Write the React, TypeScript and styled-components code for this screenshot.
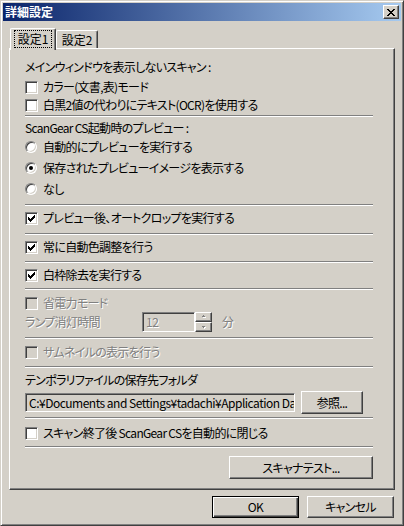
import React from 'react';
import styled, { createGlobalStyle } from 'styled-components';

const FONT = `"MS UI Gothic", "Noto Sans CJK JP", sans-serif`;

const Global = createGlobalStyle`
  html, body { margin: 0; padding: 0; background: #d4d0c8; }
  body { width: 404px; height: 526px; overflow: hidden; }
  * { box-sizing: border-box; }
`;

const Window = styled.div`
  width: 404px;
  height: 526px;
  background: #d4d0c8;
  border: 1px solid;
  border-color: #d4d0c8 #404040 #404040 #d4d0c8;
  box-shadow: inset 1px 1px #fff, inset -1px -1px #808080;
  padding: 2px;
  display: flex;
  flex-direction: column;
  font-family: ${FONT};
  font-size: 12px;
  line-height: 16px;
  color: #000;
  font-feature-settings: "palt";
  letter-spacing: -0.7px;
`;

const TitleBar = styled.div`
  height: 18px;
  flex: none;
  background: linear-gradient(to right, #0a246a, #a6caf0);
  display: flex;
  align-items: center;
  justify-content: space-between;
  padding: 0 2px 0 2px;
`;

const TitleText = styled.span`
  color: #fff;
  font-weight: bold;
  font-size: 12px;
  letter-spacing: 0;
`;

const RaisedBase = styled.div`
  background: #d4d0c8;
  border: 1px solid;
  border-color: #fff #404040 #404040 #fff;
  box-shadow: inset -1px -1px #808080, inset 1px 1px #d4d0c8;
`;

const CloseBtn = styled(RaisedBase)`
  width: 16px;
  height: 14px;
  display: flex;
  align-items: center;
  justify-content: center;
`;

const Body = styled.div`
  flex: 1;
  display: flex;
  flex-direction: column;
  padding: 0 6px 0 6px;
`;

const TabRow = styled.div`
  margin-top: 7px;
  height: 20px;
  display: flex;
  align-items: flex-end;
  padding-left: 1px;
  flex: none;
`;

const Tab = styled.div<{ $active?: boolean; $w: number }>`
  width: ${(p) => p.$w}px;
  height: ${(p) => (p.$active ? 22 : 18)}px;
  margin-bottom: ${(p) => (p.$active ? -2 : 0)}px;
  position: relative;
  z-index: ${(p) => (p.$active ? 1 : 0)};
  background: #d4d0c8;
  border-top: 1px solid #fff;
  border-left: 1px solid #fff;
  border-right: 1px solid #404040;
  border-radius: 2px 2px 0 0;
  box-shadow: inset -1px 0 #808080;
  display: flex;
  align-items: flex-start;
  justify-content: center;
  padding-top: ${(p) => (p.$active ? 2 : 1)}px;
  letter-spacing: 0;
`;

const TabLabel = styled.span<{ $focus?: boolean }>`
  display: block;
  padding: 0 3px;
  height: 16px;
  line-height: 15px;
  outline: ${(p) => (p.$focus ? '1px dotted #000' : 'none')};
  outline-offset: 0;
`;

const Panel = styled.div`
  flex: none;
  border: 1px solid;
  border-color: #fff #404040 #404040 #fff;
  box-shadow: inset -1px -1px #808080;
  padding: 0 21px 10px 15px;
  display: flex;
  flex-direction: column;
`;

const Row = styled.div<{ $mt: number; $h?: number }>`
  margin-top: ${(p) => p.$mt}px;
  height: ${(p) => p.$h ?? 16}px;
  display: flex;
  align-items: center;
  gap: 5px;
  white-space: nowrap;
  flex: none;
`;

const Label = styled.span<{ $disabled?: boolean }>`
  color: ${(p) => (p.$disabled ? '#808080' : '#000')};
  text-shadow: ${(p) => (p.$disabled ? '1px 1px #fff' : 'none')};
`;

const Sep = styled.div<{ $mt: number }>`
  margin-top: ${(p) => p.$mt}px;
  height: 2px;
  flex: none;
  border-top: 1px solid #808080;
  border-bottom: 1px solid #fff;
`;

const Box = styled.span<{ $disabled?: boolean }>`
  width: 13px;
  height: 13px;
  flex: none;
  border: 1px solid;
  border-color: #808080 #fff #fff #808080;
  box-shadow: inset 1px 1px #404040, inset -1px -1px #d4d0c8;
  background: ${(p) => (p.$disabled ? '#d4d0c8' : '#fff')};
  display: flex;
  align-items: center;
  justify-content: center;
`;

const RadioCircle = styled.span`
  width: 12px;
  height: 12px;
  flex: none;
  margin-right: 1px;
  border-radius: 50%;
  border: 1px solid;
  border-color: #808080 #fff #fff #808080;
  box-shadow: inset 1px 1px #404040, inset -1px -1px #d4d0c8;
  background: #fff;
  display: flex;
  align-items: center;
  justify-content: center;
`;

const Dot = styled.span`
  width: 4px;
  height: 4px;
  border-radius: 50%;
  background: #000;
`;

const Field = styled.div<{ $w: number; $h: number; $disabled?: boolean }>`
  width: ${(p) => p.$w}px;
  height: ${(p) => p.$h}px;
  flex: none;
  border: 1px solid;
  border-color: #808080 #fff #fff #808080;
  box-shadow: inset 1px 1px #404040, inset -1px -1px #d4d0c8;
  background: #d4d0c8;
  color: ${(p) => (p.$disabled ? '#808080' : '#000')};
  overflow: hidden;
  white-space: nowrap;
  padding: 0 2px 0 3px;
  display: flex;
  align-items: center;
  letter-spacing: -0.5px;
`;

const LampLabel = styled(Label)`
  width: 112px;
  flex: none;
`;

const Spin = styled.div`
  display: flex;
  flex-direction: column;
  flex: none;
  margin-left: -5px;
  margin-right: 5px;
`;

const SpinBtn = styled(RaisedBase)`
  width: 17px;
  height: 10px;
  display: flex;
  align-items: center;
  justify-content: center;
`;

const Button = styled(RaisedBase)<{ $w: number; $h: number; $default?: boolean }>`
  width: ${(p) => p.$w}px;
  height: ${(p) => p.$h}px;
  flex: none;
  display: flex;
  align-items: center;
  justify-content: center;
  ${(p) =>
    p.$default
      ? `border-color: #000; box-shadow: inset 1px 1px #fff, inset -1px -1px #404040, inset -2px -2px #808080, inset 2px 2px #d4d0c8;`
      : ''}
`;

const EndRow = styled.div<{ $mt: number; $pr: number }>`
  margin-top: ${(p) => p.$mt}px;
  display: flex;
  justify-content: flex-end;
  gap: 8px;
  padding-right: ${(p) => p.$pr}px;
  flex: none;
`;

const PathRow = styled(Row)`
  gap: 6px;
`;

const Check = () => (
  <svg width="7" height="7" viewBox="0 0 7 7" shapeRendering="crispEdges">
    <rect x="0" y="2" width="1" height="3" fill="#000" />
    <rect x="1" y="3" width="1" height="3" fill="#000" />
    <rect x="2" y="4" width="1" height="3" fill="#000" />
    <rect x="3" y="3" width="1" height="3" fill="#000" />
    <rect x="4" y="2" width="1" height="3" fill="#000" />
    <rect x="5" y="1" width="1" height="3" fill="#000" />
    <rect x="6" y="0" width="1" height="3" fill="#000" />
  </svg>
);

const CloseGlyph = () => (
  <svg width="8" height="7" viewBox="0 0 8 7" shapeRendering="crispEdges">
    <path d="M0 0h2v1H0zM6 0h2v1H6zM1 1h2v1H1zM5 1h2v1H5zM2 2h4v1H2zM3 3h2v1H3zM2 4h4v1H2zM1 5h2v1H1zM5 5h2v1H5zM0 6h2v1H0zM6 6h2v1H6z" fill="#000" />
  </svg>
);

const Arrow = ({ up }: { up?: boolean }) => (
  <svg width="6" height="4" viewBox="0 0 6 4" shapeRendering="crispEdges">
    {up ? (
      <>
        <path d="M3 1h1v1H3zM2 2h3v1H2z" fill="#fff" />
        <path d="M2 0h1v1H2zM1 1h3v1H1z" fill="#808080" />
      </>
    ) : (
      <>
        <path d="M2 2h3v1H2zM3 3h1v1H3z" fill="#fff" />
        <path d="M1 1h3v1H1zM2 2h1v1H2z" fill="#808080" />
      </>
    )}
  </svg>
);

const CheckRow = ({ mt, label, checked, disabled }: { mt: number; label: string; checked?: boolean; disabled?: boolean }) => (
  <Row $mt={mt}>
    <Box $disabled={disabled}>{checked ? <Check /> : null}</Box>
    <Label $disabled={disabled}>{label}</Label>
  </Row>
);

const RadioRow = ({ mt, label, on }: { mt: number; label: string; on?: boolean }) => (
  <Row $mt={mt}>
    <RadioCircle>{on ? <Dot /> : null}</RadioCircle>
    <Label>{label}</Label>
  </Row>
);

export default function App() {
  return (
    <>
      <Global />
      <Window>
        <TitleBar>
          <TitleText>詳細設定</TitleText>
          <CloseBtn>
            <CloseGlyph />
          </CloseBtn>
        </TitleBar>
        <Body>
          <TabRow>
            <Tab $active $w={46}>
              <TabLabel $focus>設定1</TabLabel>
            </Tab>
            <Tab $w={42}>
              <TabLabel>設定2</TabLabel>
            </Tab>
          </TabRow>
          <Panel>
            <Row $mt={10}>
              <Label>メインウィンドウを表示しないスキャン :</Label>
            </Row>
            <CheckRow mt={4} label="カラー(文書,表)モード" />
            <CheckRow mt={2} label="白黒2値の代わりにテキスト(OCR)を使用する" />
            <Sep $mt={2} />
            <Row $mt={3}>
              <Label>ScanGear CS起動時のプレビュー :</Label>
            </Row>
            <RadioRow mt={3} label="自動的にプレビューを実行する" />
            <RadioRow mt={5} label="保存されたプレビューイメージを表示する" on />
            <RadioRow mt={5} label="なし" />
            <Sep $mt={7} />
            <CheckRow mt={4} label="プレビュー後、オートクロップを実行する" checked />
            <Sep $mt={7} />
            <CheckRow mt={4} label="常に自動色調整を行う" checked />
            <Sep $mt={6} />
            <CheckRow mt={4} label="白枠除去を実行する" checked />
            <Sep $mt={5} />
            <CheckRow mt={5} label="省電力モード" disabled />
            <Row $mt={1} $h={20}>
              <LampLabel $disabled>ランプ消灯時間</LampLabel>
              <Field $w={53} $h={20} $disabled>
                <Label $disabled>12</Label>
              </Field>
              <Spin>
                <SpinBtn>
                  <Arrow up />
                </SpinBtn>
                <SpinBtn>
                  <Arrow />
                </SpinBtn>
              </Spin>
              <Label $disabled>分</Label>
            </Row>
            <Sep $mt={5} />
            <CheckRow mt={5} label="サムネイルの表示を行う" disabled />
            <Sep $mt={6} />
            <Row $mt={4}>
              <Label>テンポラリファイルの保存先フォルダ</Label>
            </Row>
            <PathRow $mt={3} $h={23}>
              <Field $w={270} $h={19}>C:¥Documents and Settings¥tadachi¥Application Data</Field>
              <Button $w={62} $h={23}>参照...</Button>
            </PathRow>
            <Sep $mt={3} />
            <CheckRow mt={6} label="スキャン終了後 ScanGear CSを自動的に閉じる" />
            <Sep $mt={5} />
            <EndRow $mt={8} $pr={0}>
              <Button $w={144} $h={23}>スキャナテスト...</Button>
            </EndRow>
          </Panel>
          <EndRow $mt={6} $pr={1}>
            <Button $w={87} $h={22} $default>OK</Button>
            <Button $w={87} $h={22}>キャンセル</Button>
          </EndRow>
        </Body>
      </Window>
    </>
  );
}
